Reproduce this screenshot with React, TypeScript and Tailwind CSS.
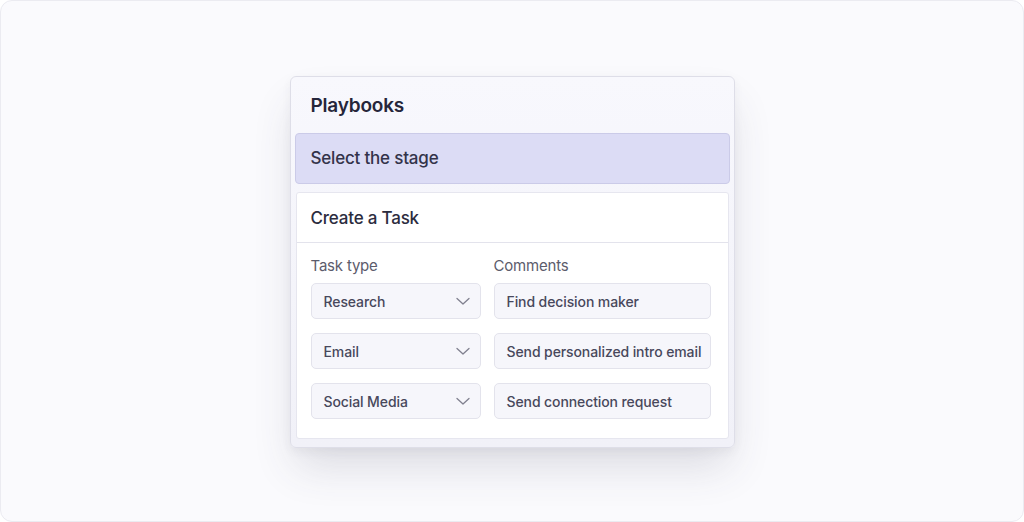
import React from "react";

const rows = [
  { type: "Research", comment: "Find decision maker" },
  { type: "Email", comment: "Send personalized intro email" },
  { type: "Social Media", comment: "Send connection request" },
];

function Chevron() {
  return (
    <svg width="14" height="8" viewBox="0 0 14 8" fill="none" className="text-[#80808f]">
      <path d="M1 1.5l6 5.5 6-5.5" stroke="currentColor" strokeWidth="1.3" strokeLinecap="round" strokeLinejoin="round" />
    </svg>
  );
}

export default function App() {
  return (
    <div
      className="w-[1024px] h-[522px] bg-[#fafafd] border border-[#ebebf1] rounded-[12px] flex justify-center pt-[75px] overflow-hidden"
      style={{ fontFamily: "Inter, 'Noto Sans', sans-serif" }}
    >
      <div className="w-[445px] h-[372px] rounded-[6px] border border-[#dedee8] bg-gradient-to-b from-[#f8f8fd] to-[#f1f1f8] p-[4px] shadow-[0_24px_40px_-6px_rgba(60,60,90,0.16),0_4px_10px_rgba(60,60,90,0.06)] flex flex-col">
        <div className="h-[52px] flex items-center pl-[16px] pb-[1px]">
          <h1 className="text-[19px] font-semibold text-[#26263a] tracking-[-0.2px]">
            Playbooks
          </h1>
        </div>
        <div className="h-[51px] rounded-[4px] border border-[#cbcbe8] bg-[#dcdcf5] flex items-center pl-[15px]">
          <span className="text-[17px] font-medium text-[#33334a] tracking-[-0.2px]">
            Select the stage
          </span>
        </div>
        <div className="mt-[8px] mb-[4px] mx-[1px] flex-1 bg-white border border-[#e6e6ef] rounded-[3px] flex flex-col">
          <div className="h-[50px] border-b border-[#e3e3ec] flex items-center pl-[14px] pt-[3px]">
            <span className="text-[17px] font-medium text-[#2c2c3e] tracking-[-0.2px]">
              Create a Task
            </span>
          </div>
          <div className="px-[14px] pt-[13px]">
            <div className="grid grid-cols-[170px_217px] gap-x-[13px] mb-[7px]">
              <span className="text-[15px] leading-[20px] text-[#5c5c6c] tracking-[-0.2px]">
                Task type
              </span>
              <span className="text-[15px] leading-[20px] text-[#5c5c6c] tracking-[-0.2px]">
                Comments
              </span>
            </div>
            <div className="flex flex-col gap-[14px]">
              {rows.map((r) => (
                <div key={r.type} className="grid grid-cols-[170px_217px] gap-x-[13px]">
                  <div className="h-[36px] rounded-[5px] border border-[#e3e3ec] bg-[#f6f6fb] flex items-center justify-between pl-[12px] pr-[10px]">
                    <span className="text-[14px] font-medium text-[#48485c] tracking-[-0.1px]">
                      {r.type}
                    </span>
                    <Chevron />
                  </div>
                  <div className="h-[36px] rounded-[5px] border border-[#e3e3ec] bg-[#f6f6fb] flex items-center pl-[12px]">
                    <span className="text-[14px] font-medium text-[#48485c] tracking-[-0.1px] whitespace-nowrap">
                      {r.comment}
                    </span>
                  </div>
                </div>
              ))}
            </div>
          </div>
        </div>
      </div>
    </div>
  );
}
